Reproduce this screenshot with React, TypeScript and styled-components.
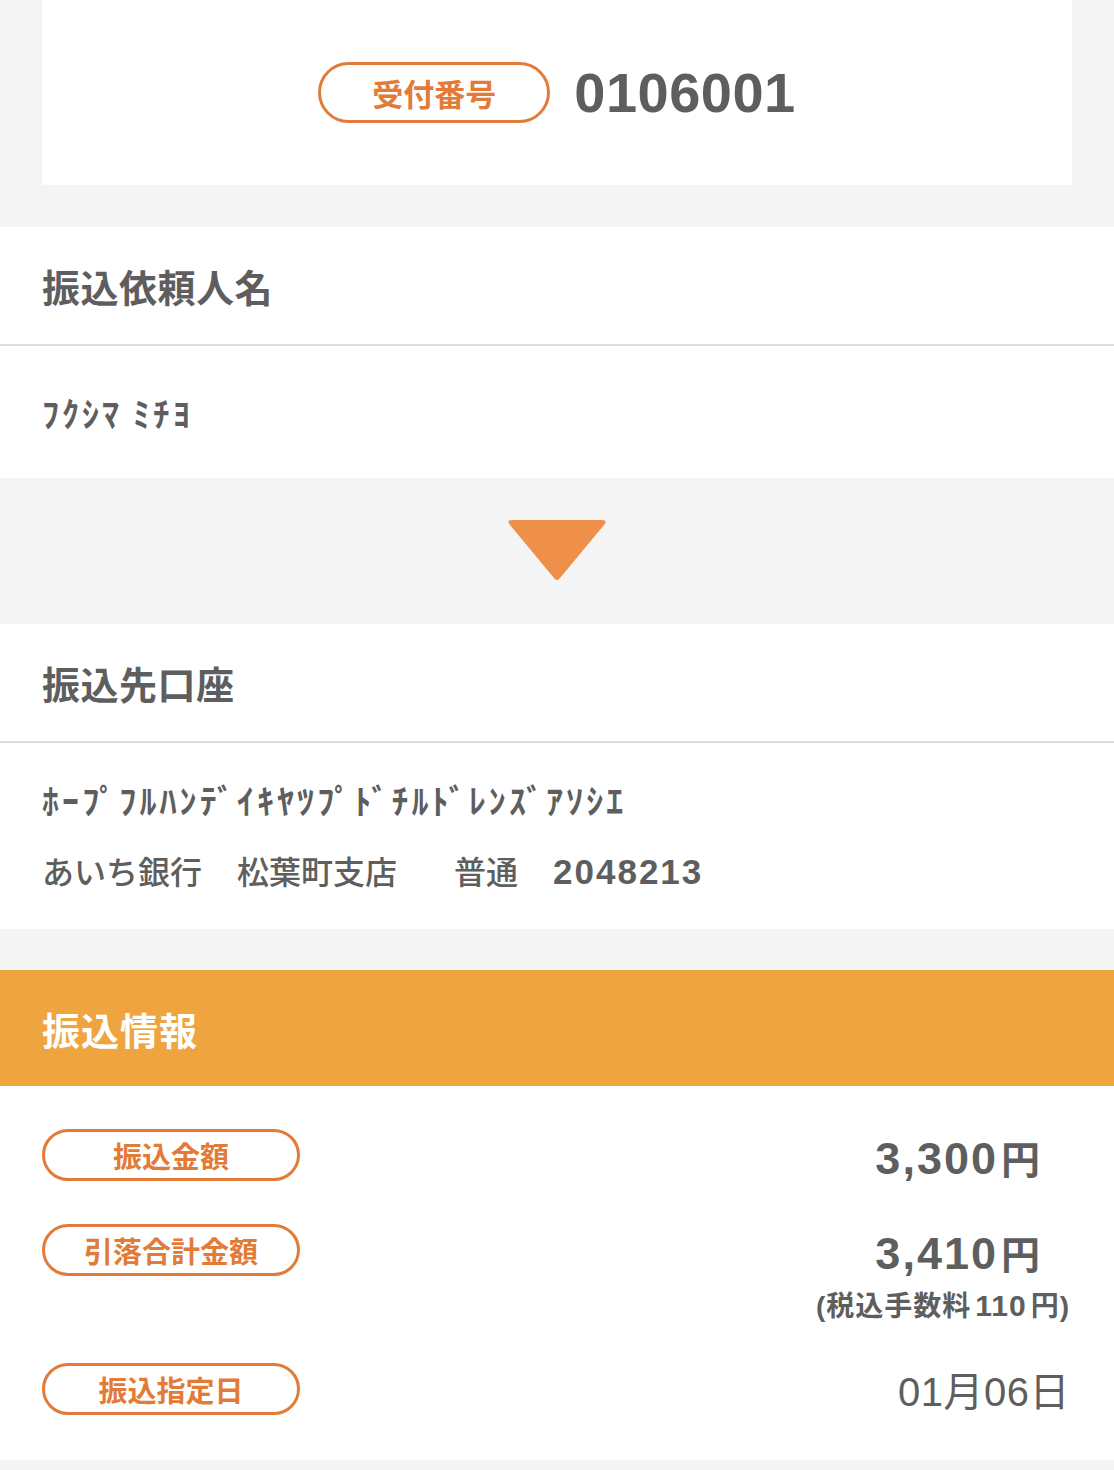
import styled, { createGlobalStyle } from 'styled-components';

const GlobalStyle = createGlobalStyle`
  html, body {
    margin: 0;
    padding: 0;
    background: #f4f4f4;
  }
  body {
    font-family: "Liberation Sans", "Noto Sans CJK JP", sans-serif;
    color: #5e5e5e;
  }
`;

const orange = '#e27b37';

const Page = styled.div`
  width: 1114px;
  min-height: 1470px;
  background: #f4f4f4;
`;

const TopCard = styled.div`
  margin: 0 42px 42px;
  height: 185px;
  background: #fff;
  display: flex;
  align-items: center;
  justify-content: center;
  gap: 24px;
`;

const Pill = styled.div<{ $w: number; $h: number; $size: number }>`
  box-sizing: border-box;
  width: ${({ $w }) => $w}px;
  height: ${({ $h }) => $h}px;
  border: 3px solid ${orange};
  border-radius: 999px;
  display: flex;
  align-items: center;
  justify-content: center;
  color: ${orange};
  font-family: "Noto Sans CJK JP", sans-serif;
  font-weight: 700;
  font-size: ${({ $size }) => $size}px;
  flex-shrink: 0;
`;

const ReceiptNo = styled.span`
  font-size: 56px;
  font-weight: 700;
  color: #5e5e5e;
  letter-spacing: 0.5px;
`;

const Section = styled.section`
  background: #fff;
`;

const Heading = styled.div`
  height: 117px;
  padding-left: 42px;
  display: flex;
  align-items: center;
  font-family: "Noto Sans CJK JP", sans-serif;
  font-size: 38px;
  font-weight: 700;
  letter-spacing: 0.5px;
  border-bottom: 2px solid #dcdcdc;
`;

const NameRow = styled.div`
  height: 132px;
  padding-left: 42px;
  display: flex;
  align-items: center;
  font-family: "Noto Sans CJK JP", sans-serif;
  font-size: 34px;
  font-weight: 700;
  letter-spacing: 3px;
`;

const ArrowArea = styled.div`
  height: 146px;
  display: flex;
  align-items: center;
  justify-content: center;
`;

const AccountBody = styled.div`
  height: 186px;
  padding-left: 42px;
  display: flex;
  flex-direction: column;
  justify-content: center;
  gap: 30px;
  font-family: "Noto Sans CJK JP", sans-serif;
`;

const KanaLine = styled.div`
  font-size: 34px;
  font-weight: 700;
  letter-spacing: 3.1px;
  line-height: 40px;
`;

const BankLine = styled.div`
  display: flex;
  align-items: baseline;
  font-size: 32px;
  font-weight: 500;
  line-height: 40px;
`;

const BankPart = styled.span<{ $gap: number }>`
  margin-right: ${({ $gap }) => $gap}px;
`;

const AccountNo = styled.span`
  font-family: "Liberation Sans", sans-serif;
  font-weight: 700;
  font-size: 35px;
  letter-spacing: 2px;
`;

const Gap = styled.div<{ $h: number }>`
  height: ${({ $h }) => $h}px;
`;

const InfoHeader = styled.div`
  height: 116px;
  background: #eea43f;
  color: #fff;
  padding-left: 42px;
  display: flex;
  align-items: center;
  font-family: "Noto Sans CJK JP", sans-serif;
  font-size: 38px;
  font-weight: 700;
  letter-spacing: 1px;
`;

const InfoBody = styled.div`
  background: #fff;
  padding: 43px 44px 42px 42px;
  display: flex;
  flex-direction: column;
`;

const InfoRow = styled.div<{ $mb: number }>`
  display: flex;
  justify-content: space-between;
  align-items: flex-start;
  margin-bottom: ${({ $mb }) => $mb}px;
`;

const ValueCol = styled.div`
  display: flex;
  flex-direction: column;
  align-items: flex-end;
`;

const Amount = styled.div`
  margin-right: 30px;
  display: flex;
  align-items: baseline;
  font-weight: 700;
  line-height: 56px;
`;

const AmountNum = styled.span`
  font-size: 45px;
  letter-spacing: 2px;
`;

const Yen = styled.span`
  font-family: "Noto Sans CJK JP", sans-serif;
  font-size: 39px;
  margin-left: 3px;
`;

const Note = styled.div`
  margin-top: 6px;
  font-family: "Liberation Sans", "Noto Sans CJK JP", sans-serif;
  font-size: 28px;
  font-weight: 700;
  line-height: 36px;
  letter-spacing: 1px;
`;

const NoteNum = styled.span`
  font-size: 30px;
  margin: 0 4px;
`;

const DateText = styled.div`
  margin-top: 3px;
  font-family: "Liberation Sans", "Noto Sans CJK JP", sans-serif;
  font-size: 40px;
  font-weight: 400;
  line-height: 52px;
  letter-spacing: 0.5px;
`;

const DownArrow = () => (
  <svg width="102" height="62" viewBox="0 0 102 62">
    <path
      d="M6 0 H96 Q102 0 98 5 L54 58 Q51 62 48 58 L4 5 Q0 0 6 0 Z"
      fill="#ee8f4a"
    />
  </svg>
);

export default function App() {
  return (
    <Page>
      <GlobalStyle />
      <TopCard>
        <Pill $w={232} $h={61} $size={31}>受付番号</Pill>
        <ReceiptNo>0106001</ReceiptNo>
      </TopCard>

      <Section>
        <Heading>振込依頼人名</Heading>
        <NameRow>ﾌｸｼﾏ ﾐﾁﾖ</NameRow>
      </Section>

      <ArrowArea>
        <DownArrow />
      </ArrowArea>

      <Section>
        <Heading>振込先口座</Heading>
        <AccountBody>
          <KanaLine>ﾎｰﾌﾟﾌﾙﾊﾝﾃﾞｲｷﾔﾂﾌﾟﾄﾞﾁﾙﾄﾞﾚﾝｽﾞｱｿｼｴ</KanaLine>
          <BankLine>
            <BankPart $gap={35}>あいち銀行</BankPart>
            <BankPart $gap={57}>松葉町支店</BankPart>
            <BankPart $gap={35}>普通</BankPart>
            <AccountNo>2048213</AccountNo>
          </BankLine>
        </AccountBody>
      </Section>

      <Gap $h={41} />

      <InfoHeader>振込情報</InfoHeader>
      <InfoBody>
        <InfoRow $mb={37}>
          <Pill $w={258} $h={52} $size={29}>振込金額</Pill>
          <Amount>
            <AmountNum>3,300</AmountNum>
            <Yen>円</Yen>
          </Amount>
        </InfoRow>
        <InfoRow $mb={38}>
          <Pill $w={258} $h={52} $size={29}>引落合計金額</Pill>
          <ValueCol>
            <Amount>
              <AmountNum>3,410</AmountNum>
              <Yen>円</Yen>
            </Amount>
            <Note>
              (税込手数料<NoteNum>110</NoteNum>円)
            </Note>
          </ValueCol>
        </InfoRow>
        <InfoRow $mb={0}>
          <Pill $w={258} $h={52} $size={29}>振込指定日</Pill>
          <DateText>01月06日</DateText>
        </InfoRow>
      </InfoBody>
    </Page>
  );
}
